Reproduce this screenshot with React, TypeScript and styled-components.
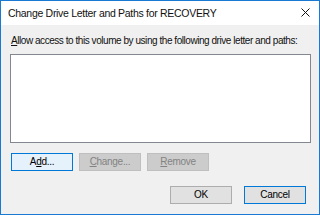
import styled, { createGlobalStyle } from "styled-components";

const GlobalStyle = createGlobalStyle`
  html, body {
    margin: 0;
    padding: 0;
    background: #f0f0f0;
  }
  * {
    box-sizing: border-box;
  }
`;

const Window = styled.div`
  width: 320px;
  height: 215px;
  border: 1px solid #1a7ad3;
  background: #f0f0f0;
  display: flex;
  flex-direction: column;
  font-family: "Liberation Sans", Arial, sans-serif;
  color: #000;
  overflow: hidden;
`;

const TitleBar = styled.div`
  height: 24px;
  background: #fff;
  display: flex;
  align-items: center;
  justify-content: space-between;
  padding: 0 8px 1px 7px;
`;

const Title = styled.span`
  font-size: 10.5px;
  letter-spacing: -0.3px;
  color: #111;
`;

const Close = styled.svg`
  width: 9px;
  height: 9px;
  margin-right: 1px;
`;

const Body = styled.div`
  flex: 1;
  display: flex;
  flex-direction: column;
  padding: 9px 8px 0 9px;
`;

const Label = styled.div`
  font-size: 10px;
  letter-spacing: -0.45px;
  padding-left: 1px;
  line-height: 14px;
  white-space: nowrap;
  color: #111;
`;

const ListBox = styled.div`
  margin-top: 6px;
  height: 89px;
  background: #fff;
  border: 1px solid #828790;
`;

const Row = styled.div<{ $end?: boolean; $gap: number; $top: number }>`
  display: flex;
  justify-content: ${(p) => (p.$end ? "flex-end" : "flex-start")};
  gap: ${(p) => p.$gap}px;
  margin-top: ${(p) => p.$top}px;
  padding-left: ${(p) => (p.$end ? 0 : 1)}px;
  padding-right: ${(p) => (p.$end ? 5 : 0)}px;
`;

type Variant = "hover" | "default" | "normal" | "disabled";

const colors: Record<Variant, { bg: string; border: string; fg: string }> = {
  hover: { bg: "#e5f1fb", border: "#0078d7", fg: "#000" },
  default: { bg: "#e1e1e1", border: "#0078d7", fg: "#000" },
  normal: { bg: "#e1e1e1", border: "#adadad", fg: "#000" },
  disabled: { bg: "#cccccc", border: "#bfbfbf", fg: "#838383" },
};

const Button = styled.div<{ $v: Variant }>`
  width: 62px;
  height: 18px;
  background: ${(p) => colors[p.$v].bg};
  border: 1px solid ${(p) => colors[p.$v].border};
  color: ${(p) => colors[p.$v].fg};
  font-size: 10px;
  letter-spacing: -0.3px;
  display: flex;
  align-items: center;
  justify-content: center;
  line-height: 1;
`;

const U = styled.span`
  text-decoration: underline;
  text-underline-offset: 1px;
`;

export default function App() {
  return (
    <>
      <GlobalStyle />
      <Window>
        <TitleBar>
          <Title>Change Drive Letter and Paths for RECOVERY</Title>
          <Close viewBox="0 0 9 9">
            <path d="M0.5 0.5 L8.5 8.5 M8.5 0.5 L0.5 8.5" stroke="#111" strokeWidth="1" fill="none" />
          </Close>
        </TitleBar>
        <Body>
          <Label>
            <U>A</U>llow access to this volume by using the following drive letter and paths:
          </Label>
          <ListBox />
          <Row $gap={6} $top={10}>
            <Button $v="hover">
              A<U>d</U>d...
            </Button>
            <Button $v="disabled">
              <U>C</U>hange...
            </Button>
            <Button $v="disabled">
              <U>R</U>emove
            </Button>
          </Row>
          <Row $end $gap={12} $top={15}>
            <Button $v="normal">OK</Button>
            <Button $v="default">Cancel</Button>
          </Row>
        </Body>
      </Window>
    </>
  );
}
